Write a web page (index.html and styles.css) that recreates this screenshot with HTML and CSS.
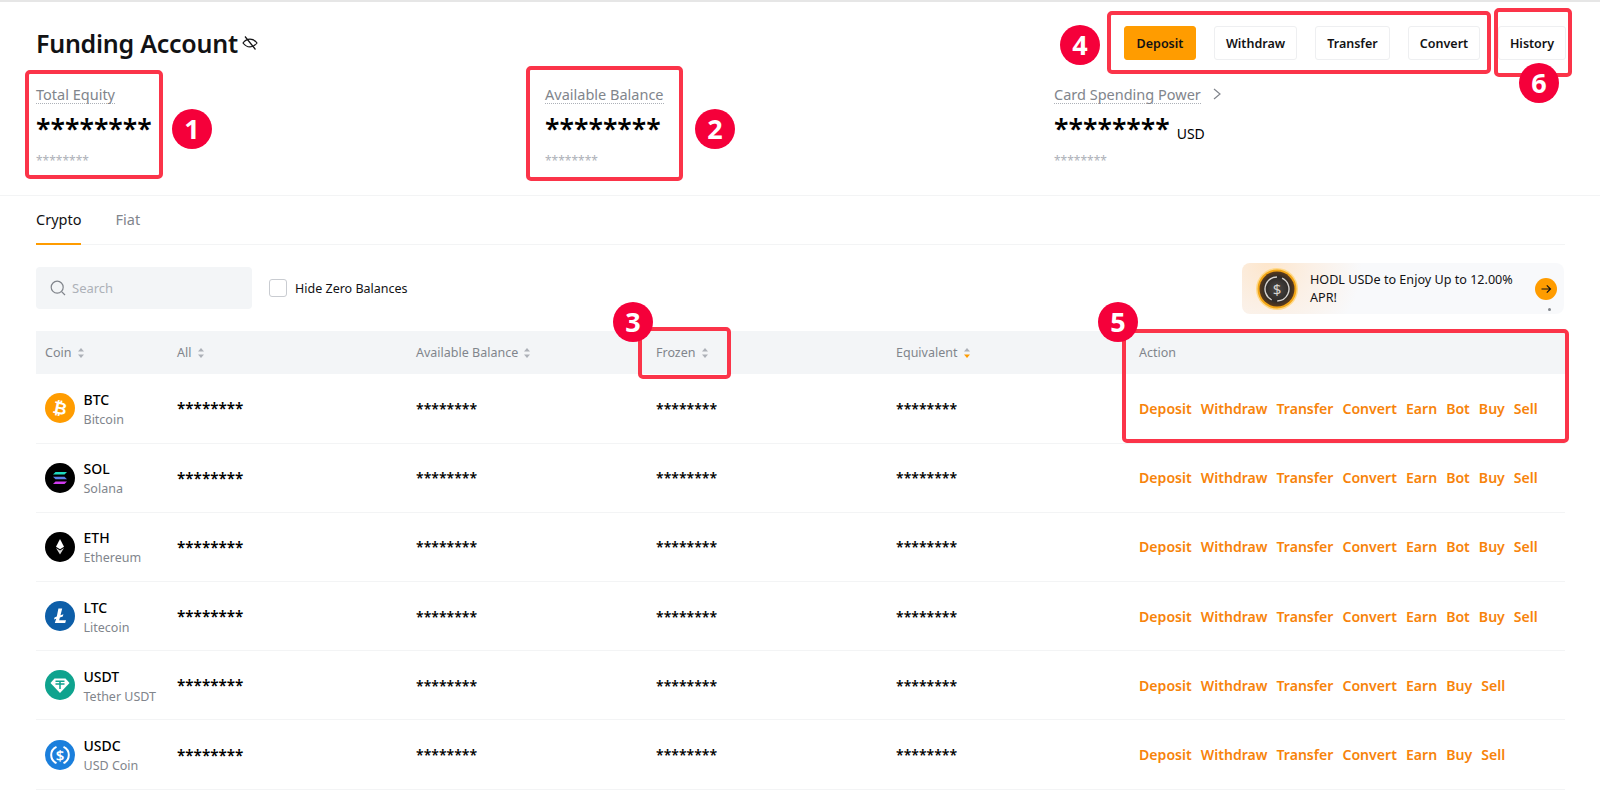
FILE: index.html
```html
<!DOCTYPE html>
<html lang="en">
<head>
    <meta charset="UTF-8">
    <meta name="viewport" content="width=device-width, initial-scale=1.0">
    <title>Funding Account</title>
    <link rel="stylesheet" href="styles.css">
</head>
<body>
    <svg class="defs" width="0" height="0">
        <symbol id="sort" viewBox="0 0 8 12">
            <path d="M4 1 7 4.6H1Z" fill="#adb1b8"/>
            <path d="M4 11 7 7.4H1Z" fill="#adb1b8"/>
        </symbol>
        <symbol id="sort-active" viewBox="0 0 8 12">
            <path d="M4 1 7 4.6H1Z" fill="#adb1b8"/>
            <path d="M4 11 7 7.4H1Z" fill="#ff9c00"/>
        </symbol>
    </svg>
    <div class="page">
        <section class="summary">
            <div class="title-row">
                <h1 class="title">Funding Account
                    <svg class="eye" viewBox="0 0 16 16" width="16" height="16" fill="none" stroke="#121214" stroke-width="1.2">
                        <path d="M1 8c2-2.700 4.400-3.900 7-3.900s5 1.200 7 3.900c-2 2.700-4.400 3.900-7 3.900S3 10.700 1 8Z"/>
                        <path d="M3 1.500 13.500 14.500"/>
                    </svg>
                </h1>
                <div class="buttons">
                    <button class="btn btn-deposit">Deposit</button>
                    <button class="btn btn-withdraw">Withdraw</button>
                    <button class="btn btn-transfer">Transfer</button>
                    <button class="btn btn-convert">Convert</button>
                    <button class="btn btn-history">History</button>
                </div>
            </div>
            <div class="stats">
                <div class="stat">
                    <div class="stat-label"><span>Total Equity</span></div>
                    <div class="stat-value">********</div>
                    <div class="stat-sub">********</div>
                </div>
                <div class="stat">
                    <div class="stat-label"><span>Available Balance</span></div>
                    <div class="stat-value">********</div>
                    <div class="stat-sub">********</div>
                </div>
                <div class="stat">
                    <div class="stat-label"><span>Card Spending Power</span>
                        <svg class="chevron" viewBox="0 0 10 14" width="10" height="14" fill="none" stroke="#81858c" stroke-width="1.2"><path d="M2 2l6 5-6 5"/></svg>
                    </div>
                    <div class="stat-value">******** <small>USD</small></div>
                    <div class="stat-sub">********</div>
                </div>
            </div>
        </section>

        <section class="assets">
            <div class="tabs">
                <a class="tab tab-active">Crypto</a>
                <a class="tab">Fiat</a>
            </div>
            <div class="filters">
                <div class="search">
                    <svg viewBox="0 0 16 16" width="16" height="16" fill="none" stroke="#81858c" stroke-width="1.2"><circle cx="7.200" cy="7.200" r="6"/><path d="M11.600 11.600 15 15"/></svg>
                    <span>Search</span>
                </div>
                <label class="hide-zero"><span class="checkbox"></span>Hide Zero Balances</label>
                <div class="banner">
                    <svg class="banner-coin" viewBox="0 0 44 44" width="44" height="44" fill="none">
                        <defs><radialGradient id="coin-dark"><stop offset="0" stop-color="#4d4a48"/><stop offset="0.7" stop-color="#2e2a28"/><stop offset="1" stop-color="#5a3a1c"/></radialGradient></defs>
                        <circle cx="22" cy="22" r="21" fill="#ffd98a"/>
                        <circle cx="22" cy="22" r="19.500" fill="#f2a516"/>
                        <circle cx="22" cy="22" r="17.500" fill="url(#coin-dark)"/>
                        <circle cx="22" cy="22" r="12" stroke="#d6d2ce" stroke-width="1.400" stroke-dasharray="32 5.700" transform="rotate(-65 22 22)"/>
                        <text x="22" y="27.500" class="banner-coin-sign">$</text>
                    </svg>
                    <p class="banner-text">HODL USDe to Enjoy Up to 12.00% APR!</p>
                    <span class="banner-arrow">
                        <svg viewBox="0 0 12 12" width="12" height="12" fill="none" stroke="#121214" stroke-width="1.200"><path d="M1.500 6h9M6.800 2.300 10.500 6 6.800 9.700"/></svg>
                    </span>
                    <span class="banner-dot"></span>
                </div>
            </div>

            <table class="coins">
                <colgroup>
                    <col class="col-coin"><col class="col-all"><col class="col-avail"><col class="col-frozen"><col class="col-equiv"><col>
                </colgroup>
                <thead>
                    <tr>
                        <th>Coin <svg class="sort"><use href="#sort"/></svg></th>
                        <th>All <svg class="sort"><use href="#sort"/></svg></th>
                        <th>Available Balance <svg class="sort"><use href="#sort"/></svg></th>
                        <th>Frozen <svg class="sort"><use href="#sort"/></svg></th>
                        <th>Equivalent <svg class="sort"><use href="#sort-active"/></svg></th>
                        <th class="action-head">Action</th>
                    </tr>
                </thead>
                <tbody>
                    <tr>
                        <td><div class="coin">
                            <svg class="coin-icon" viewBox="0 0 30 30"><circle cx="15" cy="15" r="15" fill="#ff9c00"/><text x="15" y="21" class="coin-sign" transform="rotate(12 15 15)">₿</text></svg>
                            <div><div class="coin-code">BTC</div><div class="coin-name">Bitcoin</div></div>
                        </div></td>
                        <td>********</td><td>********</td><td>********</td><td>********</td>
                        <td class="actions"><a>Deposit</a><a>Withdraw</a><a>Transfer</a><a>Convert</a><a>Earn</a><a>Bot</a><a>Buy</a><a>Sell</a></td>
                    </tr>
                    <tr>
                        <td><div class="coin">
                            <svg class="coin-icon" viewBox="0 0 30 30">
                                <circle cx="15" cy="15" r="15" fill="#000"/>
                                <path d="M10.500 9H22L19.500 11.500H8Z" fill="#1fdcc0"/>
                                <path d="M8 13.700H19.500L22 16.200H10.500Z" fill="#5c7fe6"/>
                                <path d="M10.500 18.500H22L19.500 21H8Z" fill="#d13cf0"/>
                            </svg>
                            <div><div class="coin-code">SOL</div><div class="coin-name">Solana</div></div>
                        </div></td>
                        <td>********</td><td>********</td><td>********</td><td>********</td>
                        <td class="actions"><a>Deposit</a><a>Withdraw</a><a>Transfer</a><a>Convert</a><a>Earn</a><a>Bot</a><a>Buy</a><a>Sell</a></td>
                    </tr>
                    <tr>
                        <td><div class="coin">
                            <svg class="coin-icon" viewBox="0 0 30 30">
                                <circle cx="15" cy="15" r="15" fill="#000"/>
                                <path d="M15 7 11 14.800 15 17.200 19 14.800Z" fill="#fff"/>
                                <path d="M11 16 15 22.500 19 16 15 18.400Z" fill="#d6d6d6"/>
                            </svg>
                            <div><div class="coin-code">ETH</div><div class="coin-name">Ethereum</div></div>
                        </div></td>
                        <td>********</td><td>********</td><td>********</td><td>********</td>
                        <td class="actions"><a>Deposit</a><a>Withdraw</a><a>Transfer</a><a>Convert</a><a>Earn</a><a>Bot</a><a>Buy</a><a>Sell</a></td>
                    </tr>
                    <tr>
                        <td><div class="coin">
                            <svg class="coin-icon" viewBox="0 0 30 30">
                                <circle cx="15" cy="15" r="15" fill="#0d5ea8"/>
                                <path d="M13.400 7.500H17.200L15.500 14.300 18.400 13.200 17.800 15.500 14.900 16.600 14.200 19.300H21L20.200 22H9.800L11.200 17.800 9 18.600 9.500 16.400 11.800 15.500Z" fill="#fff"/>
                            </svg>
                            <div><div class="coin-code">LTC</div><div class="coin-name">Litecoin</div></div>
                        </div></td>
                        <td>********</td><td>********</td><td>********</td><td>********</td>
                        <td class="actions"><a>Deposit</a><a>Withdraw</a><a>Transfer</a><a>Convert</a><a>Earn</a><a>Bot</a><a>Buy</a><a>Sell</a></td>
                    </tr>
                    <tr>
                        <td><div class="coin">
                            <svg class="coin-icon" viewBox="0 0 30 30">
                                <circle cx="15" cy="15" r="15" fill="#0fa38e"/>
                                <path d="M9.500 8.500H20.500L24.500 13 15 23 5.500 13Z" fill="#fff"/>
                                <path d="M10.500 11.200H19.500M10.500 14H19.500M15 11.200V19" stroke="#0fa38e" stroke-width="1.500" fill="none"/>
                            </svg>
                            <div><div class="coin-code">USDT</div><div class="coin-name">Tether USDT</div></div>
                        </div></td>
                        <td>********</td><td>********</td><td>********</td><td>********</td>
                        <td class="actions"><a>Deposit</a><a>Withdraw</a><a>Transfer</a><a>Convert</a><a>Earn</a><a>Buy</a><a>Sell</a></td>
                    </tr>
                    <tr>
                        <td><div class="coin">
                            <svg class="coin-icon" viewBox="0 0 30 30">
                                <circle cx="15" cy="15" r="15" fill="#1b7fdc"/>
                                <path d="M11.500 6.800A9 9 0 0 0 11.500 23.200M18.500 6.800A9 9 0 0 1 18.500 23.200" fill="none" stroke="#fff" stroke-width="2"/>
                                <text x="15" y="20.500" class="coin-usdc">$</text>
                            </svg>
                            <div><div class="coin-code">USDC</div><div class="coin-name">USD Coin</div></div>
                        </div></td>
                        <td>********</td><td>********</td><td>********</td><td>********</td>
                        <td class="actions"><a>Deposit</a><a>Withdraw</a><a>Transfer</a><a>Convert</a><a>Earn</a><a>Buy</a><a>Sell</a></td>
                    </tr>
                </tbody>
            </table>
        </section>

        <div class="mark mark-1"></div>
        <div class="mark mark-2"></div>
        <div class="mark mark-3"></div>
        <div class="mark mark-4"></div>
        <div class="mark mark-5"></div>
        <div class="mark mark-6"></div>
        <div class="badge badge-1">1</div>
        <div class="badge badge-2">2</div>
        <div class="badge badge-3">3</div>
        <div class="badge badge-4">4</div>
        <div class="badge badge-5">5</div>
        <div class="badge badge-6">6</div>
    </div>
</body>
</html>
```

FILE: styles.css
```css
* {
    box-sizing: border-box;
}
body {
    margin: 0;
    background-color: white;
    color: #121214;
    font-family: "Noto Sans", Arial, sans-serif;
    overflow: hidden;
}
.defs {
    display: block;
    height: 0;
}
.page {
    position: relative;
    height: 794px;
    border-top: 2px solid #e6e6e6;
}

/* top summary */
.summary {
    height: 194px;
    padding: 24px 34px 0 36px;
    border-bottom: 1px solid #f3f4f5;
}
.title-row {
    display: flex;
    justify-content: space-between;
    align-items: center;
    height: 34px;
}
.title {
    display: flex;
    align-items: center;
    gap: 4px;
    margin: 0;
    font-size: 25px;
    font-weight: 600;
    letter-spacing: -0.25px;
}
.buttons {
    display: flex;
    gap: 18px;
}
.btn {
    height: 34px;
    padding: 0;
    border: 1px solid #eeeff1;
    border-radius: 3px;
    background-color: white;
    color: #121214;
    font-family: inherit;
    font-size: 12.500px;
    font-weight: 600;
}
.btn-deposit {
    width: 72px;
    border-color: #ff9c00;
    background-color: #ff9c00;
}
.btn-withdraw {
    width: 83px;
}
.btn-transfer {
    width: 75px;
}
.btn-convert {
    width: 72px;
}
.btn-history {
    width: 68px;
}
.stats {
    display: flex;
    margin-top: 24px;
}
.stat {
    width: 509px;
}
.stat-label {
    display: flex;
    align-items: center;
    gap: 11px;
    height: 20px;
    color: #81858c;
    font-size: 14.500px;
}
.stat-label span {
    border-bottom: 1px dotted #adb1b8;
    line-height: 18px;
}
.stat-value {
    height: 30px;
    margin-top: 10px;
    color: #000;
    font-size: 26.500px;
    font-weight: 600;
    line-height: 30px;
}
.stat-value small {
    font-size: 14px;
    font-weight: 400;
}
.stat-sub {
    margin-top: 9px;
    color: #adb1b8;
    font-size: 12px;
    line-height: 16px;
}

/* tabs and filters */
.assets {
    padding: 0 35px 0 36px;
}
.tabs {
    display: flex;
    gap: 34px;
    height: 49px;
    border-bottom: 1px solid #f3f4f5;
}
.tab {
    height: 49px;
    padding-top: 13px;
    color: #81858c;
    font-size: 14.500px;
    line-height: 20px;
}
.tab-active {
    border-bottom: 2px solid #ff9c00;
    color: #121214;
}
.filters {
    display: flex;
    align-items: flex-start;
    height: 86px;
    padding-top: 18px;
}
.search {
    display: flex;
    align-items: center;
    gap: 6px;
    width: 216px;
    height: 42px;
    margin-top: 4px;
    padding-left: 14px;
    border-radius: 4px;
    background-color: #f3f5f7;
    color: #adb1b8;
    font-size: 13px;
}
.hide-zero {
    display: flex;
    align-items: center;
    gap: 8px;
    height: 42px;
    margin: 4px auto 0 17px;
    font-size: 12.500px;
}
.checkbox {
    width: 18px;
    height: 18px;
    border: 1px solid #c9ccd1;
    border-radius: 3px;
}
.banner {
    position: relative;
    display: flex;
    align-items: center;
    width: 322px;
    height: 51px;
    margin-right: 1px;
    padding: 0 7px 0 13px;
    border-radius: 8px;
    background: radial-gradient(circle at 25px 0, #fde6cc 0, #fbf0e6 45px, #f8f9fb 95px);
}
.banner-coin-sign {
    fill: #d8d4d0;
    font-size: 15px;
    text-anchor: middle;
}
.banner-text {
    flex: 1;
    margin: 0 0 0 11px;
    font-size: 12.600px;
    line-height: 18px;
}
.banner-arrow {
    display: flex;
    align-items: center;
    justify-content: center;
    width: 22px;
    height: 22px;
    border-radius: 50%;
    background-color: #ff9c00;
}
.banner-dot {
    position: absolute;
    right: 13px;
    bottom: 3px;
    width: 3px;
    height: 3px;
    border-radius: 50%;
    background-color: #81858c;
}

/* table */
.coins {
    width: 100%;
    border-collapse: collapse;
    table-layout: fixed;
    font-size: 14px;
}
.col-coin {
    width: 132px;
}
.col-all {
    width: 239px;
}
.col-avail,
.col-frozen {
    width: 240px;
}
.col-equiv {
    width: 243px;
}
.coins th {
    height: 43px;
    padding: 0 9px;
    background-color: #f3f5f7;
    color: #81858c;
    font-size: 12.500px;
    font-weight: 400;
    text-align: left;
}
.coins td {
    height: 69.200px;
    padding: 0 9px;
    border-bottom: 1px solid #f3f4f5;
    color: #000;
    font-weight: 600;
}
.coins td:nth-child(2) {
    font-size: 15.200px;
}
.sort {
    width: 8px;
    height: 12px;
    margin-left: 2px;
    vertical-align: -2px;
}
.coin {
    display: flex;
    align-items: center;
    gap: 8.500px;
}
.coin-icon {
    width: 30px;
    height: 30px;
    flex: none;
}
.coin-sign {
    fill: white;
    font-family: "DejaVu Sans", sans-serif;
    font-size: 17px;
    font-weight: 700;
    text-anchor: middle;
}
.coin-usdc {
    fill: white;
    font-family: "Noto Sans", sans-serif;
    font-size: 15px;
    font-weight: 600;
    text-anchor: middle;
}
.coin-code {
    padding-top: 3px;
    font-size: 14px;
    font-weight: 500;
    line-height: 20px;
}
.coin-name {
    color: #81858c;
    font-size: 12.500px;
    font-weight: 400;
    line-height: 20px;
}
.coins td.actions {
    color: #f7830a;
    font-size: 14.100px;
    font-weight: 600;
    white-space: nowrap;
}
.actions a {
    margin-right: 9px;
}

/* red annotations over the page */
.mark {
    position: absolute;
    border: 4px solid #fb3449;
    border-radius: 5px;
}
.mark-1 {
    left: 25px;
    top: 68px;
    width: 138px;
    height: 109px;
}
.mark-2 {
    left: 526px;
    top: 64px;
    width: 157px;
    height: 115px;
}
.mark-3 {
    left: 638px;
    top: 325px;
    width: 93px;
    height: 52px;
}
.mark-4 {
    left: 1107px;
    top: 9px;
    width: 384px;
    height: 63px;
}
.mark-5 {
    left: 1122px;
    top: 327px;
    width: 447px;
    height: 114px;
}
.mark-6 {
    left: 1494px;
    top: 6px;
    width: 78px;
    height: 69px;
}
.badge {
    position: absolute;
    width: 40px;
    height: 40px;
    border-radius: 50%;
    background-color: #f5003a;
    color: white;
    font-family: "Open Sans", sans-serif;
    font-size: 27px;
    font-weight: 700;
    line-height: 40px;
    text-align: center;
}
.badge-1 {
    left: 172px;
    top: 107px;
}
.badge-2 {
    left: 695px;
    top: 107px;
}
.badge-3 {
    left: 613px;
    top: 300px;
}
.badge-4 {
    left: 1060px;
    top: 23px;
}
.badge-5 {
    left: 1098px;
    top: 300px;
}
.badge-6 {
    left: 1519px;
    top: 61px;
}
```
